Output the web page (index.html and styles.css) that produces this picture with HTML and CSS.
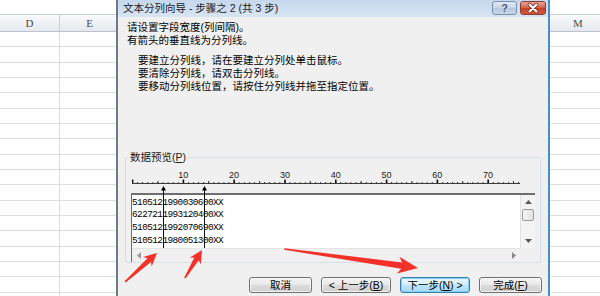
FILE: index.html
```html
<!DOCTYPE html>
<html>
<head>
<meta charset="utf-8">
<link rel="stylesheet" href="styles.css">
</head>
<body>
<div class="sheet">
  <div class="sheet-top"></div>
  <div class="col-hdr">
    <div class="hc hc-d">D</div>
    <div class="hc hc-e">E</div>
    <div class="hc hc-fill"></div>
    <div class="hc hc-m">M</div>
  </div>
  <div class="grid"></div>
</div>

<div class="dialog">
  <div class="titlebar">
    <span class="title">文本分列向导 - 步骤之 2 (共 3 步)</span>
    <div class="cap help">?</div>
    <div class="cap close">
      <svg width="24" height="12" viewBox="0 0 24 12">
        <path d="M8.5 2.5 L15.5 9.5 M15.5 2.5 L8.5 9.5" stroke="#7b3326" stroke-width="3.6" stroke-linecap="round"/>
        <path d="M8.5 2.5 L15.5 9.5 M15.5 2.5 L8.5 9.5" stroke="#ffffff" stroke-width="2" stroke-linecap="round"/>
      </svg>
    </div>
  </div>
  <div class="body">
    <div class="intro">
      <p>请设置字段宽度(列间隔)。</p>
      <p>有箭头的垂直线为分列线。</p>
    </div>
    <div class="howto">
      <p>要建立分列线，请在要建立分列处单击鼠标。</p>
      <p>要清除分列线，请双击分列线。</p>
      <p>要移动分列线位置，请按住分列线并拖至指定位置。</p>
    </div>
    <fieldset class="preview-box">
      <legend>数据预览(<u>P</u>)</legend>
      <div class="preview">
        <svg class="ruler" width="404" height="29" viewBox="0 0 404 29">
          <defs>
            <pattern id="minor" patternUnits="userSpaceOnUse" x="1" y="0" width="5.08" height="29">
              <rect x="0" y="18" width="1" height="1" fill="#333"/>
            </pattern>
          </defs>
          <rect x="1" y="0" width="388" height="29" fill="url(#minor)"/>
          <rect x="1" y="19" width="388" height="1" fill="#3a3a3a"/>
          <g fill="#333">
            <rect x="26.4" y="17" width="1" height="2"/>
            <rect x="77.2" y="17" width="1" height="2"/>
            <rect x="128" y="17" width="1" height="2"/>
            <rect x="178.8" y="17" width="1" height="2"/>
            <rect x="229.6" y="17" width="1" height="2"/>
            <rect x="280.4" y="17" width="1" height="2"/>
            <rect x="331.2" y="17" width="1" height="2"/>
            <rect x="382" y="17" width="1" height="2"/>
          </g>
          <g fill="#111">
            <rect x="1" y="15.5" width="1.4" height="3.5"/>
            <rect x="51.6" y="15.5" width="1.6" height="3.5"/>
            <rect x="102.4" y="15.5" width="1.6" height="3.5"/>
            <rect x="153.2" y="15.5" width="1.6" height="3.5"/>
            <rect x="204" y="15.5" width="1.6" height="3.5"/>
            <rect x="254.8" y="15.5" width="1.6" height="3.5"/>
            <rect x="305.6" y="15.5" width="1.6" height="3.5"/>
            <rect x="356.4" y="15.5" width="1.6" height="3.5"/>
          </g>
          <g class="ruler-num" text-anchor="middle">
            <text x="52.3" y="14">10</text>
            <text x="103.1" y="14">20</text>
            <text x="153.9" y="14">30</text>
            <text x="204.7" y="14">40</text>
            <text x="255.5" y="14">50</text>
            <text x="306.3" y="14">60</text>
            <text x="357.1" y="14">70</text>
          </g>
        </svg>
        <div class="data">
          <div class="data-main">
            <div class="data-text">5105121990030600XX
6227211993120400XX
5105121992070690XX
5105121980051300XX</div>
            <div class="vscroll">
              <div class="sb-arrow">
                <svg width="7" height="4" viewBox="0 0 7 4"><path d="M0 4 L3.5 0 L7 4 Z" fill="#5a5a5a"/></svg>
              </div>
              <div class="thumb"></div>
              <div class="sb-space"></div>
              <div class="sb-arrow">
                <svg width="7" height="4" viewBox="0 0 7 4"><path d="M0 0 L3.5 4 L7 0 Z" fill="#5a5a5a"/></svg>
              </div>
            </div>
          </div>
          <div class="hscroll">
            <div class="hs-arrow">
              <svg width="4" height="7" viewBox="0 0 4 7"><path d="M4 0 L0 3.5 L4 7 Z" fill="#9a9a9a"/></svg>
            </div>
            <div class="hs-arrow">
              <svg width="4" height="7" viewBox="0 0 4 7"><path d="M0 0 L4 3.5 L0 7 Z" fill="#8a8a8a"/></svg>
            </div>
          </div>
        </div>
        <svg class="breaks" width="404" height="98" viewBox="0 0 404 98">
          <path d="M32.5 22 L30 26.5 L35 26.5 Z" fill="#000"/>
          <rect x="32" y="26" width="1" height="58" fill="#111"/>
          <path d="M73.5 22 L71 26.5 L76 26.5 Z" fill="#000"/>
          <rect x="73" y="26" width="1" height="58" fill="#111"/>
        </svg>
      </div>
    </fieldset>
    <div class="buttons">
      <div class="btn w63">取消</div>
      <div class="btn w70">&lt; 上一步(<u>B</u>)</div>
      <div class="btn w70 default">下一步(<u>N</u>) &gt;</div>
      <div class="btn w63">完成(<u>F</u>)</div>
    </div>
  </div>
</div>

<svg class="annot" width="600" height="296" viewBox="0 0 600 296">
  <g fill="#f3302a">
    <polygon transform="translate(157 253) rotate(-42.2)" points="0,0 -13,-6.5 -10.5,-2.6 -43,-0.8 -43,0.8 -10.5,2.6 -13,6.5"/>
    <polygon transform="translate(202 250) rotate(-58.7)" points="0,0 -13,-6.5 -10.5,-2.6 -33,-0.8 -33,0.8 -10.5,2.6 -13,6.5"/>
    <polygon transform="translate(418 268) rotate(8.1)" points="0,0 -20,-8.5 -16.5,-3.2 -135,-0.8 -135,0.8 -16.5,3.2 -20,8.5"/>
  </g>
</svg>
</body>
</html>
```

FILE: styles.css
```css
* { box-sizing: border-box; }
html, body { margin: 0; padding: 0; }
body {
  width: 600px;
  height: 296px;
  overflow: hidden;
  position: relative;
  background: #fff;
  font-family: "Liberation Sans", "Noto Sans CJK SC", sans-serif;
  color: #000;
}

/* spreadsheet behind the dialog */
.sheet { width: 607px; height: 296px; }
.sheet-top { height: 14px; background: #fff; }
.col-hdr {
  display: flex;
  height: 18px;
  background: linear-gradient(#f9fafc, #e5e9ef);
  border-top: 1px solid #c9cfd9;
  border-bottom: 1px solid #bcc3cf;
}
.hc {
  font-family: "Liberation Serif", serif;
  font-size: 11px;
  line-height: 16px;
  color: #4a4a4a;
  text-align: center;
  border-right: 1px solid #c9cfd9;
}
.hc-d { width: 60px; }
.hc-e { width: 60px; }
.hc-fill { flex: 1; }
.hc-m { width: 58px; border-right: none; color: #3b5a4f; }
.grid {
  height: 264px;
  background:
    linear-gradient(to right, transparent 59px, #d9dde6 59px, #d9dde6 60px, transparent 60px),
    repeating-linear-gradient(to bottom, transparent 0, transparent 14.33px, #d9dde6 14.33px, #d9dde6 15.33px);
}

/* dialog window */
.dialog {
  position: absolute;
  left: 116px;
  top: 0;
  width: 434px;
  height: 296px;
  background: #f0f0f0;
  border-left: 2px solid #6f7985;
  border-right: 2px solid #4b8ccb;
}
.titlebar {
  display: flex;
  align-items: flex-start;
  height: 17px;
  background: linear-gradient(#c6d8ed, #d7e4f3);
}
.title {
  flex: 1;
  padding-left: 5px;
  font-size: 10.5px;
  line-height: 17px;
  color: #1a1a1a;
  white-space: nowrap;
}
.cap {
  height: 14px;
  margin-top: 1px;
  border-radius: 3px;
  display: flex;
  align-items: center;
  justify-content: center;
}
.help {
  width: 25px;
  margin-right: 3px;
  border: 1px solid #7d91aa;
  background: linear-gradient(#e1e9f4, #c8d7e9 48%, #b5c8de 52%, #c8d8eb);
  font-size: 11px;
  font-weight: bold;
  color: #44586e;
  text-shadow: 0 0 1px #fff;
}
.close {
  width: 26px;
  margin-right: 2px;
  border: 1px solid #8c3d33;
  background: linear-gradient(#e9a795, #d4684f 45%, #c2412a 52%, #d4583e);
}

.body { padding-top: 4px; }
.intro, .howto { font-size: 10.5px; line-height: 13px; white-space: nowrap; }
.intro p, .howto p { margin: 0; }
.intro { padding-left: 9px; }
.howto { margin-top: 7px; padding-left: 20px; }

.preview-box {
  margin: 57px 7px 0 7px;
  padding: 0 5px 0 5px;
  min-width: 0;
  border: 1px solid #d5dfe5;
  border-radius: 3px;
}
.preview-box legend {
  margin-left: -2px;
  padding: 0 1px;
  font-size: 10.5px;
  line-height: 14px;
  color: #222;
}
.preview { position: relative; }
.ruler { display: block; }
.ruler-num { font-family: "Liberation Sans", sans-serif; font-size: 9px; fill: #222; }
.breaks { position: absolute; left: 0; top: 0; pointer-events: none; }

.data {
  height: 69px;
  display: flex;
  flex-direction: column;
  border-top: 2px solid #6e6e6e;
  border-left: 1px solid #6e6e6e;
}
.data-main { display: flex; height: 53px; }
.data-text {
  flex: 1;
  background: #fff;
  font-family: "Liberation Mono", monospace;
  font-size: 9.4px;
  letter-spacing: -0.56px;
  line-height: 12.7px;
  padding-top: 1.5px;
  white-space: pre;
  overflow: hidden;
  color: #000;
}
.vscroll {
  width: 15px;
  display: flex;
  flex-direction: column;
  align-items: center;
  background: #f3f3f3;
  border-left: 1px solid #e2e2e2;
}
.sb-arrow { height: 14px; display: flex; align-items: center; justify-content: center; }
.thumb {
  width: 12px;
  height: 12px;
  border: 1px solid #9a9a9a;
  border-radius: 2px;
  background: linear-gradient(to right, #f4f4f4, #e2e2e2);
}
.sb-space { flex: 1; }
.hscroll {
  height: 14px;
  width: 389px;
  display: flex;
  justify-content: space-between;
  border-top: 1px solid #e4e4e4;
}
.hs-arrow { width: 14px; display: flex; align-items: center; justify-content: center; }

.buttons {
  display: flex;
  justify-content: flex-end;
  gap: 9px;
  margin-top: 14px;
  padding-right: 6px;
}
.btn {
  height: 16px;
  font-size: 10.5px;
  line-height: 14px;
  text-align: center;
  white-space: nowrap;
  color: #000;
  border: 1px solid #707070;
  border-radius: 3px;
  background: linear-gradient(#f2f2f2, #ebebeb 45%, #dddddd 50%, #cfcfcf);
  box-shadow: inset 0 0 0 1px rgba(255, 255, 255, 0.7);
}
.w63 { width: 63px; }
.w70 { width: 70px; }
.btn.default {
  border-color: #3c7fb1;
  box-shadow: inset 0 0 0 1px #7fd0f7;
  background: linear-gradient(#eaf6fd, #d9f0fc 45%, #bee6fd 50%, #a7d9f5);
}

.annot { position: absolute; left: 0; top: 0; pointer-events: none; }
```
